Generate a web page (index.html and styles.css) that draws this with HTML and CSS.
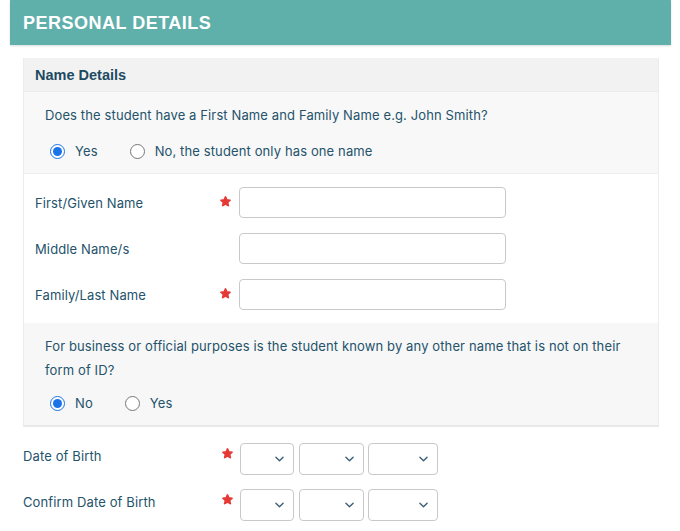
FILE: index.html
```html
<!DOCTYPE html>
<html lang="en">
<head>
  <meta charset="UTF-8">
  <meta name="viewport" content="width=device-width, initial-scale=1.0">
  <title>Personal Details</title>
  <link rel="stylesheet" href="styles.css">
</head>
<body>
  <div class="page">
    <div class="page-header">PERSONAL DETAILS</div>

    <div class="page-body">
      <div class="panel">
        <div class="panel-head">Name Details</div>

        <div class="section section-grey">
          <p class="question">Does the student have a First Name and Family Name e.g. John Smith?</p>
          <div class="choices">
            <label class="choice"><input type="radio" name="twonames" checked> Yes</label>
            <label class="choice choice-wide"><input type="radio" name="twonames"> No, the student only has one name</label>
          </div>
        </div>

        <div class="section section-white">
          <div class="form-row">
            <span class="label">First/Given Name</span>
            <span class="req"><svg viewBox="0 0 12 12"><polygon points="6,1 7.4,4.3 11,4.6 8.3,7 9.1,10.5 6,8.7 2.9,10.5 3.7,7 1,4.6 4.6,4.3"/></svg></span>
            <input class="text-input" type="text">
          </div>
          <div class="form-row">
            <span class="label">Middle Name/s</span>
            <span class="req"></span>
            <input class="text-input" type="text">
          </div>
          <div class="form-row">
            <span class="label">Family/Last Name</span>
            <span class="req"><svg viewBox="0 0 12 12"><polygon points="6,1 7.4,4.3 11,4.6 8.3,7 9.1,10.5 6,8.7 2.9,10.5 3.7,7 1,4.6 4.6,4.3"/></svg></span>
            <input class="text-input" type="text">
          </div>
        </div>

        <div class="section section-grey section-last">
          <p class="question question-tall">For business or official purposes is the student known by any other name that is not on their form of ID?</p>
          <div class="choices">
            <label class="choice"><input type="radio" name="othername" checked> No</label>
            <label class="choice"><input type="radio" name="othername"> Yes</label>
          </div>
        </div>
      </div>

      <div class="date-rows">
        <div class="date-row">
          <span class="label date-label">Date of Birth</span>
          <span class="req req-date"><svg viewBox="0 0 12 12"><polygon points="6,1 7.4,4.3 11,4.6 8.3,7 9.1,10.5 6,8.7 2.9,10.5 3.7,7 1,4.6 4.6,4.3"/></svg></span>
          <div class="selects">
            <span class="select sel-day"><svg viewBox="0 0 10 6"><path d="M1 1 L5 5 L9 1"/></svg></span>
            <span class="select sel-month"><svg viewBox="0 0 10 6"><path d="M1 1 L5 5 L9 1"/></svg></span>
            <span class="select sel-year"><svg viewBox="0 0 10 6"><path d="M1 1 L5 5 L9 1"/></svg></span>
          </div>
        </div>
        <div class="date-row">
          <span class="label date-label">Confirm Date of Birth</span>
          <span class="req req-date"><svg viewBox="0 0 12 12"><polygon points="6,1 7.4,4.3 11,4.6 8.3,7 9.1,10.5 6,8.7 2.9,10.5 3.7,7 1,4.6 4.6,4.3"/></svg></span>
          <div class="selects">
            <span class="select sel-day"><svg viewBox="0 0 10 6"><path d="M1 1 L5 5 L9 1"/></svg></span>
            <span class="select sel-month"><svg viewBox="0 0 10 6"><path d="M1 1 L5 5 L9 1"/></svg></span>
            <span class="select sel-year"><svg viewBox="0 0 10 6"><path d="M1 1 L5 5 L9 1"/></svg></span>
          </div>
        </div>
      </div>
    </div>
  </div>
</body>
</html>
```

FILE: styles.css
```css
body {
  margin: 0;
  padding: 0;
  background-color: #fff;
  font-family: Inter, 'Noto Sans', sans-serif;
  font-size: 13px;
  letter-spacing: 0.12px;
  color: #24536b;
}

.page {
  width: 661px;
  margin-left: 10px;
}

.page-header {
  height: 45px;
  line-height: 46px;
  padding-left: 13px;
  background-color: #5fafab;
  color: #fff;
  font-family: 'Liberation Sans', Arial, sans-serif;
  font-weight: bold;
  font-size: 18px;
  letter-spacing: 0.5px;
  box-shadow: 0 1px 2px rgba(0, 0, 0, 0.15);
}

.page-body {
  padding: 13px 12px 0 13px;
}

.panel {
  border: 1px solid #ececec;
  border-top: 0;
  border-bottom: 2px solid #e9e9e9;
}

.panel-head {
  height: 33px;
  line-height: 34px;
  padding: 0 11px;
  background-color: #f2f2f2;
  border-bottom: 1px solid #ebebeb;
  color: #1c4a63;
  font-family: 'Liberation Sans', Arial, sans-serif;
  font-weight: bold;
  font-size: 14.5px;
  letter-spacing: 0;
}

.section {
  padding: 13px 21px 12px;
}

.section-grey {
  background-color: #f8f8f8;
  border-bottom: 1px solid #eeeeee;
}

.section-last {
  padding-top: 11px;
  border-bottom: 0;
  background-color: #f7f7f7;
}

.section-white {
  padding: 13px 11px 13px;
  display: flex;
  flex-direction: column;
  gap: 15px;
}

.question {
  margin: 0;
  line-height: 20px;
}

.question-tall {
  line-height: 24px;
}

.choices {
  display: flex;
  align-items: center;
  gap: 27px;
  height: 20px;
  margin-top: 16px;
}

.section-last .choices {
  margin-top: 11px;
}

.choice {
  display: flex;
  align-items: center;
  gap: 10px;
}

.choice input {
  width: 15px;
  height: 15px;
  margin: 0 0 0 5px;
  accent-color: #1a73e8;
}

.form-row {
  display: grid;
  grid-template-columns: 181px 23px 267px;
  align-items: center;
  height: 31px;
}

.label {
  color: #24536b;
}

.req {
  display: flex;
  align-items: center;
  padding-left: 4px;
  margin-top: -3px;
}

.req svg {
  width: 11px;
  height: 11px;
  fill: #e53935;
  stroke: #e53935;
  stroke-width: 1.8;
  stroke-linejoin: round;
}

.text-input {
  box-sizing: border-box;
  width: 267px;
  height: 31px;
  margin: 0;
  border: 1px solid #c9c9c9;
  border-radius: 4px;
  background: #fff;
}

.date-rows {
  display: flex;
  flex-direction: column;
  gap: 14px;
  margin-top: 16px;
}

.date-row {
  display: grid;
  grid-template-columns: 195px 22px auto;
  align-items: start;
}

.date-label {
  padding-top: 5px;
  line-height: 16px;
}

.req-date {
  margin-top: 5px;
}

.selects {
  display: flex;
  gap: 4px;
}

.select {
  box-sizing: border-box;
  height: 32px;
  display: flex;
  align-items: center;
  justify-content: flex-end;
  padding-right: 9px;
  border: 1px solid #c9c9c9;
  border-radius: 4px;
  background: #fff;
}

.select svg {
  width: 9px;
  height: 6px;
  fill: none;
  stroke: #3d5e74;
  stroke-width: 1.5;
  stroke-linecap: round;
  stroke-linejoin: round;
}

.sel-day { width: 54px; }
.sel-month { width: 65px; margin-left: 1px; }
.sel-year { width: 70px; }
```
